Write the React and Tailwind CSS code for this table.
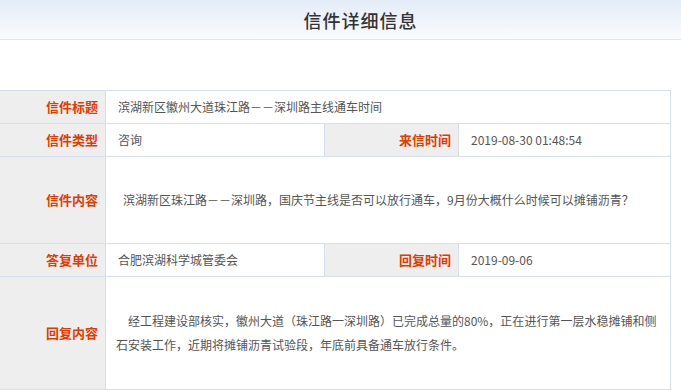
import React from "react";

const letter = {
    title: "滨湖新区徽州大道珠江路－－深圳路主线通车时间",
    type: "咨询",
    sentAt: "2019-08-30 01:48:54",
    content: "滨湖新区珠江路－－深圳路，国庆节主线是否可以放行通车，9月份大概什么时候可以摊铺沥青？",
    replyUnit: "合肥滨湖科学城管委会",
    repliedAt: "2019-09-06",
    reply: [
        "经工程建设部核实，徽州大道（珠江路一深圳路）已完成总量的80%，正在进行第一层水稳摊铺和侧",
        "石安装工作，近期将摊铺沥青试验段，年底前具备通车放行条件。",
    ],
};

const Label = ({children}) => (
    <th className="border border-[#d6dfeb] bg-[#eeeeee] pr-[7px] text-right align-middle text-[13px] font-bold text-[#e03c00]">
        {children}
    </th>
);

const Value = ({children, className = "", ...rest}) => (
    <td className={`border border-[#d6dfeb] bg-white pl-3 align-middle text-[12px] text-[#555555] ${className}`} {...rest}>
        {children}
    </td>
);

const App = () => {
    return (
        <div className="min-h-screen w-[681px] overflow-hidden bg-white font-['Noto_Sans_CJK_SC',sans-serif]">
            <div className="flex h-10 items-center justify-center border-b border-[#dfe7f1] bg-gradient-to-b from-[#e3ecf7] to-[#fafcfe] pl-10">
                <h1 className="text-[18px] font-medium leading-none tracking-[1px] text-[#333333]">信件详细信息</h1>
            </div>

            <table className="-ml-px mt-[50px] w-[671px] table-fixed border-collapse">
                <colgroup>
                    <col className="w-[106px]"/>
                    <col className="w-[219px]"/>
                    <col className="w-[134px]"/>
                    <col className="w-[212px]"/>
                </colgroup>
                <tbody>
                <tr className="h-[33px]">
                    <Label>信件标题</Label>
                    <Value colSpan={3}>{letter.title}</Value>
                </tr>
                <tr className="h-[33px]">
                    <Label>信件类型</Label>
                    <Value>{letter.type}</Value>
                    <Label>来信时间</Label>
                    <Value>{letter.sentAt}</Value>
                </tr>
                <tr className="h-[87px]">
                    <Label>信件内容</Label>
                    <Value colSpan={3} className="indent-[5px]">{letter.content}</Value>
                </tr>
                <tr className="h-[33px]">
                    <Label>答复单位</Label>
                    <Value>{letter.replyUnit}</Value>
                    <Label>回复时间</Label>
                    <Value>{letter.repliedAt}</Value>
                </tr>
                <tr className="h-[113px]">
                    <Label>回复内容</Label>
                    <Value colSpan={3} className="!pl-[10px] leading-6">
                        <p className="indent-3">{letter.reply[0]}</p>
                        <p>{letter.reply[1]}</p>
                    </Value>
                </tr>
                </tbody>
            </table>
        </div>
    );
};

export default App;
